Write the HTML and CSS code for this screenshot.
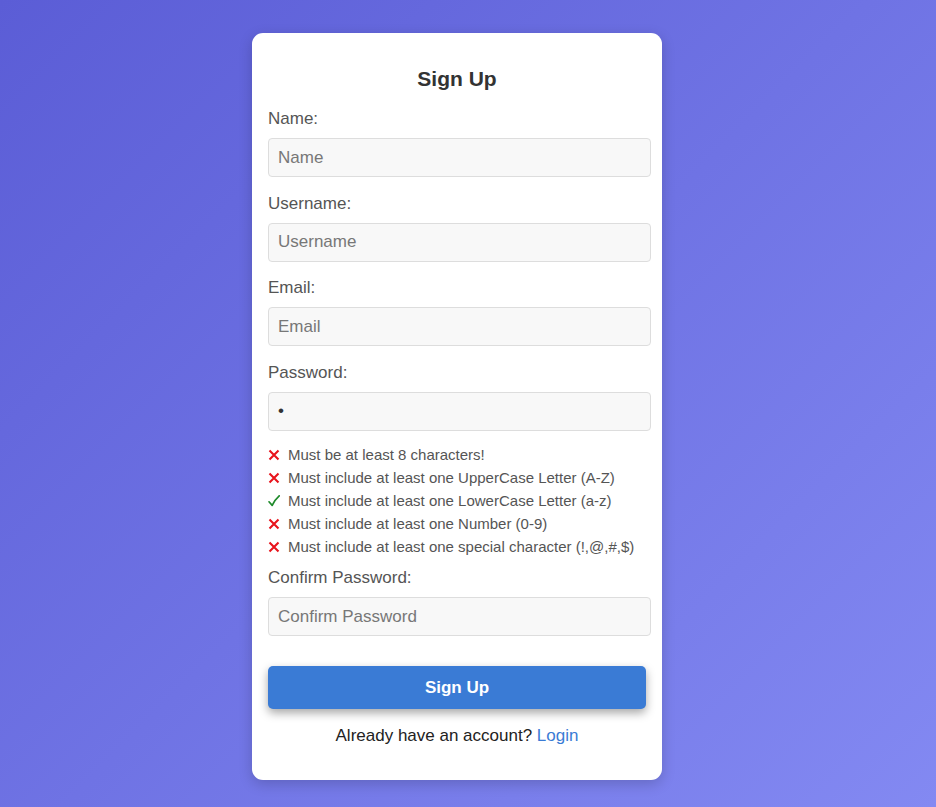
FILE: index.html
```html
<!DOCTYPE html>
<html lang="en">
<head>
<meta charset="utf-8">
<title>Sign Up</title>
<link rel="stylesheet" href="styles.css">
</head>
<body>
<main class="page">
  <form class="card">
    <h2 class="title">Sign Up</h2>

    <div class="field">
      <label class="label">Name:</label>
      <input class="input" type="text" placeholder="Name">
    </div>
    <div class="field">
      <label class="label">Username:</label>
      <input class="input" type="text" placeholder="Username">
    </div>
    <div class="field">
      <label class="label">Email:</label>
      <input class="input" type="text" placeholder="Email">
    </div>
    <div class="field field-tight">
      <label class="label">Password:</label>
      <input class="input" type="password" value="a">
    </div>

    <ul class="rules">
      <li class="rule"><svg class="ico" viewBox="0 0 12 12"><path d="M1.5 1.5 L10.5 10.5 M10.5 1.5 L1.5 10.5" stroke="#e8141c" stroke-width="2.1" fill="none"/></svg>Must be at least 8 characters!</li>
      <li class="rule"><svg class="ico" viewBox="0 0 12 12"><path d="M1.5 1.5 L10.5 10.5 M10.5 1.5 L1.5 10.5" stroke="#e8141c" stroke-width="2.1" fill="none"/></svg>Must include at least one UpperCase Letter (A-Z)</li>
      <li class="rule"><svg class="ico" viewBox="0 0 12 12"><path d="M1 6.8 L4.2 10.4 Q6.5 5 11.2 0.8" stroke="#1e8a2a" stroke-width="1.7" fill="none" stroke-linecap="round" stroke-linejoin="round"/></svg>Must include at least one LowerCase Letter (a-z)</li>
      <li class="rule"><svg class="ico" viewBox="0 0 12 12"><path d="M1.5 1.5 L10.5 10.5 M10.5 1.5 L1.5 10.5" stroke="#e8141c" stroke-width="2.1" fill="none"/></svg>Must include at least one Number (0-9)</li>
      <li class="rule"><svg class="ico" viewBox="0 0 12 12"><path d="M1.5 1.5 L10.5 10.5 M10.5 1.5 L1.5 10.5" stroke="#e8141c" stroke-width="2.1" fill="none"/></svg>Must include at least one special character (!,@,#,$)</li>
    </ul>

    <div class="field field-last">
      <label class="label">Confirm Password:</label>
      <input class="input" type="password" placeholder="Confirm Password">
    </div>

    <button class="btn" type="button">Sign Up</button>

    <p class="foot">Already have an account? <a class="link" href="#">Login</a></p>
  </form>
</main>
</body>
</html>
```

FILE: styles.css
```css
* { box-sizing: border-box; }
html, body { margin: 0; height: 100%; }
body {
  font-family: "Liberation Sans", Arial, sans-serif;
  background: linear-gradient(135deg, #5b5dd6 0%, #8389f2 100%);
  min-height: 807px;
}
.page {
  display: flex;
  justify-content: center;
  align-items: flex-start;
  padding: 33px 22px 0 0;
}
.card {
  width: 410px;
  background: #ffffff;
  border-radius: 11px;
  padding: 34px 16px 34px 16px;
  box-shadow: 0 4px 14px rgba(0, 0, 0, 0.18);
  display: flex;
  flex-direction: column;
}
.title {
  margin: 0 0 18px 0;
  text-align: center;
  font-size: 21px;
  line-height: 24px;
  font-weight: bold;
  color: #333333;
}
.field {
  display: flex;
  flex-direction: column;
  margin-bottom: 16.5px;
}
.field-tight { margin-bottom: 12.5px; }
.field-last { margin-bottom: 30px; }
.label {
  font-size: 17px;
  line-height: 20px;
  color: #555555;
  margin-bottom: 9px;
}
.input {
  width: calc(100% + 5px);
  height: 39px;
  padding: 0 9px;
  font-family: "Liberation Sans", Arial, sans-serif;
  font-size: 17px;
  color: #333333;
  background: #f8f8f8;
  border: 1px solid #dddddd;
  border-radius: 4px;
  outline: none;
}
.input::placeholder { color: #777777; }
.rules {
  list-style: none;
  margin: 0 0 10px 0;
  padding: 0;
}
.rule {
  display: flex;
  align-items: center;
  font-size: 15px;
  line-height: 23px;
  color: #555555;
}
.ico {
  width: 12px;
  height: 12px;
  margin-right: 8px;
  flex: none;
}
.btn {
  width: 378px;
  height: 43px;
  border: none;
  border-radius: 5px;
  background: #3a7bd5;
  color: #ffffff;
  font-family: "Liberation Sans", Arial, sans-serif;
  font-size: 17px;
  font-weight: bold;
  box-shadow: 0 4px 10px rgba(0, 0, 0, 0.35);
  cursor: pointer;
}
.foot {
  margin: 17px 0 0 0;
  text-align: center;
  font-size: 17px;
  line-height: 20px;
  color: #222222;
}
.link {
  color: #3a7bd5;
  text-decoration: none;
}
```
